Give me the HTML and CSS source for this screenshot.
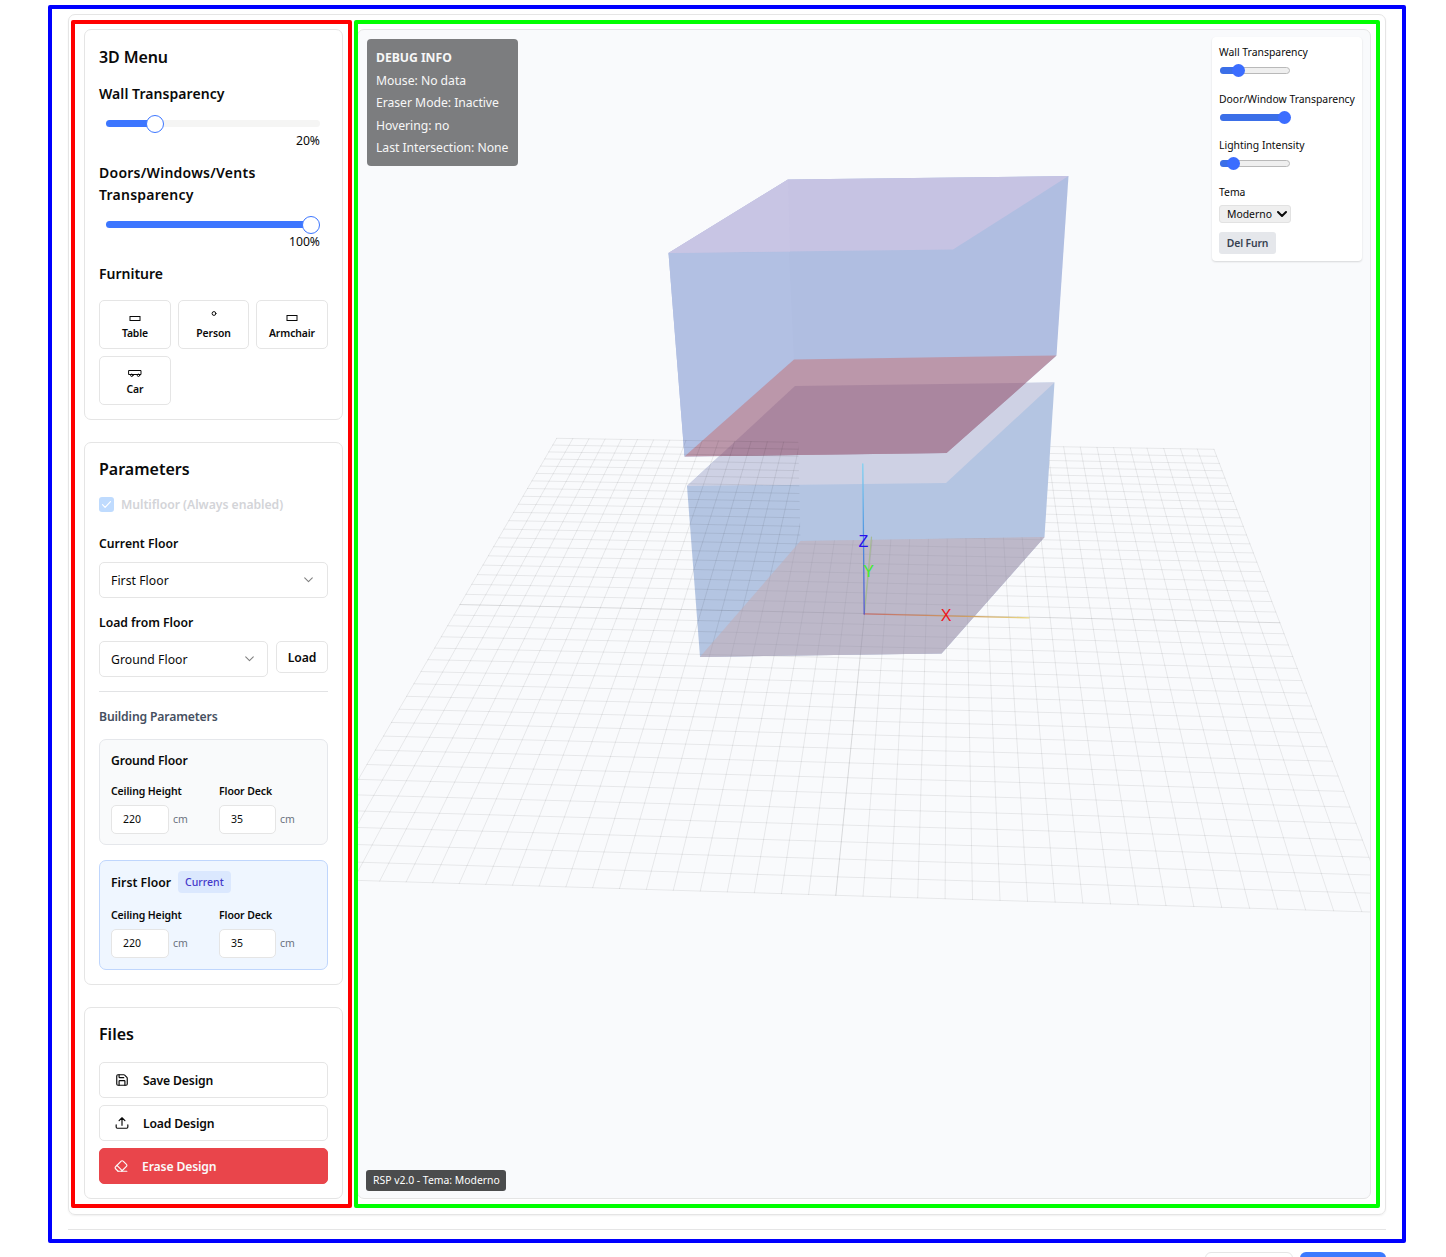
FILE: index.html
```html
<!DOCTYPE html>
<html lang="en">
<head>
<meta charset="utf-8">
<title>RSP 3D Design</title>
<link rel="stylesheet" href="styles.css">
</head>
<body>
<main class="page">
  <section class="workspace">
    <aside class="sidebar">
      <section class="card">
        <h2 class="menu-title">3D Menu</h2>
        <h3 class="first">Wall Transparency</h3>
        <div class="slider"><div class="track"><div class="fill" style="width:49px"></div><div class="thumb" style="left:40px"></div></div></div>
        <div class="value">20%</div>
        <h3 class="wide">Doors/Windows/Vents<br>Transparency</h3>
        <div class="slider"><div class="track"><div class="fill" style="width:205px"></div><div class="thumb" style="left:196px"></div></div></div>
        <div class="value">100%</div>
        <h3>Furniture</h3>
        <div class="furniture">
          <button class="item"><svg width="16" height="16" viewBox="0 0 16 16"><rect x="3" y="8.5" width="10" height="4"/></svg>Table</button>
          <button class="item"><svg width="16" height="16" viewBox="0 0 16 16"><circle cx="8" cy="5.5" r="1.9"/></svg>Person</button>
          <button class="item"><svg width="16" height="16" viewBox="0 0 16 16"><rect x="3" y="7.5" width="10" height="5"/></svg>Armchair</button>
          <button class="item"><svg width="16" height="16" viewBox="0 0 16 16"><path d="M2 6.500h12v4H2z"/><circle cx="4.800" cy="11.300" r="1.200"/><circle cx="11.500" cy="11.300" r="1.200"/></svg>Car</button>
        </div>
      </section>

      <section class="card">
        <h2>Parameters</h2>
        <div class="check"><span class="box"><svg width="15" height="15" viewBox="0 0 15 15"><path d="M3.500 7.700l2.600 2.600 5.400-5.600"/></svg></span><span>Multifloor (Always enabled)</span></div>
        <div class="label current-label">Current Floor</div>
        <div class="select"><span>First Floor</span><svg class="chev" width="13" height="13" viewBox="0 0 24 24"><path d="M5 9l7 7 7-7"/></svg></div>
        <div class="label load-label">Load from Floor</div>
        <div class="load-row">
          <div class="select"><span>Ground Floor</span><svg class="chev" width="13" height="13" viewBox="0 0 24 24"><path d="M5 9l7 7 7-7"/></svg></div>
          <button class="load">Load</button>
        </div>
        <hr class="rule">
        <div class="label building">Building Parameters</div>
        <div class="floor">
          <div class="floor-title">Ground Floor</div>
          <div class="fields">
            <div><div class="field-label">Ceiling Height</div><div class="field"><span class="input">220</span><span class="unit">cm</span></div></div>
            <div><div class="field-label">Floor Deck</div><div class="field"><span class="input narrow">35</span><span class="unit">cm</span></div></div>
          </div>
        </div>
        <div class="floor active">
          <div class="floor-title">First Floor<span class="badge">Current</span></div>
          <div class="fields">
            <div><div class="field-label">Ceiling Height</div><div class="field"><span class="input">220</span><span class="unit">cm</span></div></div>
            <div><div class="field-label">Floor Deck</div><div class="field"><span class="input narrow">35</span><span class="unit">cm</span></div></div>
          </div>
        </div>
      </section>

      <section class="card files">
        <h2>Files</h2>
        <button class="file"><svg width="14" height="14" viewBox="0 0 24 24"><path d="M15.200 3a2 2 0 0 1 1.400.6l3.800 3.800a2 2 0 0 1 .6 1.400V19a2 2 0 0 1-2 2H5a2 2 0 0 1-2-2V5a2 2 0 0 1 2-2z"/><path d="M17 21v-7a1 1 0 0 0-1-1H8a1 1 0 0 0-1 1v7"/><path d="M7 3v4a1 1 0 0 0 1 1h7"/></svg>Save Design</button>
        <button class="file"><svg width="14" height="14" viewBox="0 0 24 24"><path d="M12 3v13M17 8l-5-5-5 5M2 15v4a2 2 0 0 0 2 2h16a2 2 0 0 0 2-2v-4"/></svg>Load Design</button>
        <button class="file erase"><svg width="14" height="14" viewBox="0 0 24 24"><path d="m7 21-4.300-4.300c-1-1-1-2.500 0-3.400l9.600-9.600c1-1 2.500-1 3.400 0l5.600 5.600c1 1 1 2.500 0 3.400L13 21"/><path d="M22 21H7"/><path d="m5 11 9 9"/></svg>Erase Design</button>
      </section>
    </aside>

    <section class="viewport">
      <svg class="scene" viewBox="358 30 1012 1168" width="1012" height="1168">
        <defs>
          <clipPath id="slab"><path d="M794 359.500L1056.500 355.500 946.500 453 684.500 456.500z"/></clipPath>
          <clipPath id="ground"><path clip-rule="evenodd" d="M358 30H1370V1198H358zM797 386L1054.500 382.500 1044.500 537 800.500 541z"/></clipPath>
          <linearGradient id="zAxis" gradientUnits="userSpaceOnUse" x1="0" y1="614" x2="0" y2="464"><stop offset="0" stop-color="#5355cf"/><stop offset=".5" stop-color="#4f92df"/><stop offset="1" stop-color="#7fd2f2"/></linearGradient>
          <linearGradient id="xAxis" gradientUnits="userSpaceOnUse" x1="864" y1="0" x2="1029" y2="0"><stop offset="0" stop-color="#c4716f"/><stop offset=".6" stop-color="#cc9a60"/><stop offset="1" stop-color="#ead987"/></linearGradient>
        </defs>
        <path fill="#b4c5e2" d="M795 386L1054.500 382.500 1044.500 537 941.500 653.500 700 657 687 486z"/>
        <path fill="#ced1e4" d="M795 386L1054.500 382.500 946 483 687 486z"/>
        <path fill="#bdb8c9" d="M800.500 541L1044.500 537 941.500 653.500 700 657z"/>
        <path fill="#b0bee1" d="M788 179.500L1068.500 176 1056.500 355.500 946.500 453 684.500 456.500 668.500 253z"/>
        <path fill="#b2c0e3" d="M789 252L794 359.500 684.500 456.500 668.500 253z"/>
        <path fill="#c6c3e3" d="M788 179.500L1068.500 176 953 249.500 668.500 253z"/>
        <path fill="#c8c5e4" d="M788 179.500L790 251.500 668.500 253z"/>
        <path fill="#bb97aa" d="M794 359.500L1056.500 355.500 946.500 453 684.500 456.500z"/>
        <path clip-path="url(#slab)" fill="#aa869f" d="M795 386L1054.500 382.500 946 483 687 486z"/>
        <g id="grid" class="grid" clip-path="url(#ground)"></g>
        <path fill="#bdb8c9" opacity=".45" d="M800.500 541L1044.500 537 941.500 653.500 700 657z"/>
        <path stroke="#a5ba93" stroke-width="1.200" d="M864.300 613.500L871.500 537"/>
        <path stroke="url(#xAxis)" stroke-width="1.300" d="M864 613.800L1029 617.800"/>
        <path stroke="url(#zAxis)" stroke-width="1.300" d="M864.200 614L862.800 464"/>
        <g class="axis-names">
          <text x="863.500" y="546.500" fill="#2a10ec">Z</text>
          <text x="868.500" y="577" fill="#3fec30">Y</text>
          <text x="946" y="620.500" fill="#ee1620">X</text>
        </g>
      </svg>

      <div class="debug"><b>DEBUG INFO</b><span>Mouse: No data</span><span>Eraser Mode: Inactive</span><span>Hovering: no</span><span>Last Intersection: None</span></div>

      <div class="controls">
        <div class="control"><div>Wall Transparency</div><div class="range"><i style="width:18px"></i><b style="left:11px"></b></div></div>
        <div class="control"><div>Door/Window Transparency</div><div class="range"><i style="width:64px"></i><b style="left:57px"></b></div></div>
        <div class="control"><div>Lighting Intensity</div><div class="range"><i style="width:13px"></i><b style="left:6px"></b></div></div>
        <div class="tema">Tema</div>
        <div class="theme"><span>Moderno</span><svg width="10" height="8" viewBox="0 0 10 8"><path d="M1 2l4 4 4-4"/></svg></div>
        <button class="del">Del Furn</button>
      </div>

      <div class="version">RSP v2.0 - Tema: Moderno</div>
    </section>
  </section>

  <hr class="page-rule">
  <footer class="actions"><div class="ghost"></div><div class="primary"></div></footer>
</main>
<div class="frame frame-page"></div>
<div class="frame frame-side"></div>
<div class="frame frame-view"></div>
<script src="grid.js"></script>
</body>
</html>
```
FILE: styles.css
```css
* { box-sizing: border-box; }
body { margin: 0; height: 1257px; overflow: hidden; position: relative; background: #fff; color: #0a0a0a; font-family: "Noto Sans", sans-serif; font-size: 12.2px; }
button { font: inherit; color: inherit; background: #fff; border: 1px solid #e5e5e5; border-radius: 5px; padding: 0; font-weight: 600; letter-spacing: -.15px; }
svg { fill: none; stroke: currentColor; stroke-width: 2; stroke-linecap: round; stroke-linejoin: round; flex: none; }
h2, h3 { margin: 0; font-weight: 600; }
h2 { font-size: 16px; line-height: 25px; }
h3 { font-size: 14px; line-height: 22px; margin-top: 11px; }
h3.first { margin-top: 13px; letter-spacing: .06px; }
h3.wide { letter-spacing: .25px; }
.menu-title { line-height: 26px; letter-spacing: -.1px; }

.page { padding: 14px 60px 0 68px; }
.workspace { display: flex; gap: 14px; height: 1201px; padding: 14px 14px 15px 15px; border: 1px solid #e5e5e5; border-radius: 7px; box-shadow: 0 1px 2px rgba(0,0,0,.06); }
.sidebar { width: 259px; display: flex; flex-direction: column; gap: 22px; flex: none; }
.card { border: 1px solid #e5e5e5; border-radius: 7px; padding: 14px; flex: none; }

.slider { height: 15px; margin-top: 11px; padding: 4px 8px 0 7px; }
.track { position: relative; height: 7px; border-radius: 4px; background: #f5f5f4; }
.fill { height: 7px; border-radius: 4px; background: #3c76ff; }
.thumb { position: absolute; top: -5px; width: 18px; height: 18px; border: 1px solid #3c76ff; border-radius: 50%; background: #fff; }
.value { height: 20px; line-height: 20px; padding-right: 8px; text-align: right; }
.furniture { display: grid; grid-template-columns: 72px 71px 72px; gap: 7px; margin-top: 15px; }
.item { height: 49px; display: flex; flex-direction: column; align-items: center; padding-top: 7px; font-size: 10.4px; line-height: 16px; letter-spacing: -.1px; }
.item svg { stroke-width: 1; stroke-linejoin: miter; margin-bottom: 1px; }

.check { display: flex; align-items: center; gap: 7px; height: 20px; margin-top: 12px; font-weight: 600; letter-spacing: -.03px; color: #d3d4d8; }
.box { width: 15px; height: 15px; border-radius: 3px; background: #bfdbfe; color: #fff; display: flex; }
.box svg { stroke-width: 1.2; }
.label { height: 20px; line-height: 20px; font-weight: 600; }
.current-label { margin-top: 20px; }
.load-label { margin-top: 15px; }
.select { display: flex; align-items: center; justify-content: space-between; height: 36px; flex: 1; padding: 0 12px 0 11px; border: 1px solid #e5e5e5; border-radius: 5px; letter-spacing: .05px; }
.current-label, .load-label { margin-bottom: 8px; }
.chev { color: #808080; margin-top: -2px; }
.load-row { display: flex; gap: 8px; }
.load-row .select { padding-right: 11px; }
.load { width: 52px; height: 32px; }
.rule { border: 0; height: 1px; background: #e2e3e5; margin: 14px 0; }
.building { color: #46505f; line-height: 21px; letter-spacing: -.15px; }
.floor { height: 106px; margin-top: 13px; padding: 11px; border: 1px solid #e5e7eb; border-radius: 7px; background: #f9fafb; }
.floor-title { display: flex; align-items: center; height: 19px; font-weight: 600; letter-spacing: -.12px; margin-bottom: 12px; }
.fields { display: grid; grid-template-columns: 1fr 1fr; gap: 11px; }
.field-label { height: 18px; line-height: 18px; margin-bottom: 5px; font-size: 10.5px; font-weight: 600; letter-spacing: -.12px; }
.field { display: flex; align-items: center; gap: 4px; font-size: 10.5px; color: #6b7280; }
.unit { margin-top: -2px; }
.input { width: 58px; height: 29px; line-height: 27px; padding-left: 11px; border: 1px solid #e5e5e5; border-radius: 5px; background: #fff; color: #0a0a0a; }
.narrow { width: 57px; }
.floor.active { height: 110px; margin-top: 15px; padding-top: 10px; background: #eff6ff; border-color: #bfd6fd; }
.active .floor-title { height: 22px; margin-bottom: 13px; letter-spacing: .03px; }
.badge { height: 22px; line-height: 22px; margin-left: 7px; padding: 0 7px; border-radius: 4px; background: #dbe8fe; color: #4338ca; font-size: 10.5px; font-weight: 500; letter-spacing: 0; }

.file { display: flex; align-items: center; gap: 14px; width: 229px; height: 36px; margin-top: 7px; padding-left: 15px; }
h2 + .file { margin-top: 15px; }
.erase { padding-left: 14px; background: #e9454b; border-color: #e9454b; color: #fafafa; }

.viewport { position: relative; flex: 1; overflow: hidden; border: 1px solid #e5e5e5; border-radius: 7px; background: #f9fafc; }
.scene { display: block; stroke: none; }
.grid { stroke: #000; stroke-width: 1; stroke-opacity: .075; }
.grid .axis { stroke-opacity: .13; }
.axis-names { font: 16px "Liberation Sans", sans-serif; text-anchor: middle; }

.debug { position: absolute; left: 9px; top: 9px; width: 151px; height: 127px; padding: 8px 9px; border-radius: 4px; background: #7c7d7f; color: #f7f7f7; line-height: 22.5px; letter-spacing: -.03px; }
.debug b, .debug span { display: block; white-space: nowrap; }
.controls { position: absolute; left: 854px; top: 7px; width: 150px; height: 224px; padding: 7px; border-radius: 4px; background: #fff; box-shadow: 0 1px 2px rgba(0,0,0,.14); font-size: 10.4px; line-height: 16px; white-space: nowrap; }
.control { height: 46.6px; }
.range { position: relative; width: 70px; height: 7px; margin: 7px 0 0 1px; border: 1px solid #b9b9b9; border-radius: 4px; background: #efefef; }
.range i { position: absolute; left: -1px; top: -1px; height: 7px; border-radius: 4px; background: #3b6fe8; }
.range b { position: absolute; top: -4px; width: 13px; height: 13px; border-radius: 50%; background: #3b6dff; }
.theme { display: flex; align-items: center; justify-content: space-between; width: 72px; height: 18px; margin-top: 5px; padding: 0 3px 0 7px; border: 1px solid #e2e2e2; border-radius: 3px; background: #efefef; }
.del { display: block; width: 57px; height: 22px; margin-top: 9px; border: 0; border-radius: 3px; background: #e5e7eb; color: #374151; }
.version { position: absolute; left: 8px; bottom: 7px; width: 140px; height: 21px; line-height: 21px; padding-left: 7px; border-radius: 3px; background: #4b4c4d; color: #fff; font-size: 10.4px; white-space: nowrap; }

.page-rule { border: 0; height: 1px; background: #e5e5e5; margin: 14px 0 22px; }
.actions { display: flex; justify-content: flex-end; gap: 7px; }
.actions div { height: 32px; border-radius: 6px; }
.ghost { width: 88px; border: 1px solid #e5e5e5; }
.primary { width: 86px; background: #3c7aff; }

.frame { position: absolute; pointer-events: none; border: 4px solid; border-radius: 2px; }
.frame-page { left: 48px; top: 5px; width: 1358px; height: 1238px; border-color: #00f; }
.frame-side { left: 71px; top: 20px; width: 281px; height: 1188px; border-color: #f00; }
.frame-view { left: 354px; top: 20px; width: 1026px; height: 1188px; border-color: #0f0; }
```
FILE: grid.js
```js
// Ground grid: a unit square projected onto the four corners of the floor plane.
const [a, b, c, d] = [[556.7, 438.3], [1214, 449.3], [1390, 912.6], [300.6, 878.6]];
const dx1 = b[0] - c[0], dx2 = d[0] - c[0], dx3 = a[0] - b[0] + c[0] - d[0];
const dy1 = b[1] - c[1], dy2 = d[1] - c[1], dy3 = a[1] - b[1] + c[1] - d[1];
const den = dx1 * dy2 - dx2 * dy1;
const g = (dx3 * dy2 - dx2 * dy3) / den;
const h = (dx1 * dy3 - dx3 * dy1) / den;
function project(u, v) {
  const w = g * u + h * v + 1;
  return [0, 1].map(k => ((b[k] - a[k] + g * b[k]) * u + (d[k] - a[k] + h * d[k]) * v + a[k]) / w);
}
const grid = document.getElementById('grid');
function line(p, q, axis) {
  const el = document.createElementNS('http://www.w3.org/2000/svg', 'path');
  el.setAttribute('d', `M${p}L${q}`);
  if (axis) el.setAttribute('class', 'axis');
  grid.appendChild(el);
}
for (let i = 0; i <= 40; i++) {
  const t = i / 40;
  line(project(t, 0), project(t, 1), i === 20);
  line(project(0, t), project(1, t), i === 20);
}
```
